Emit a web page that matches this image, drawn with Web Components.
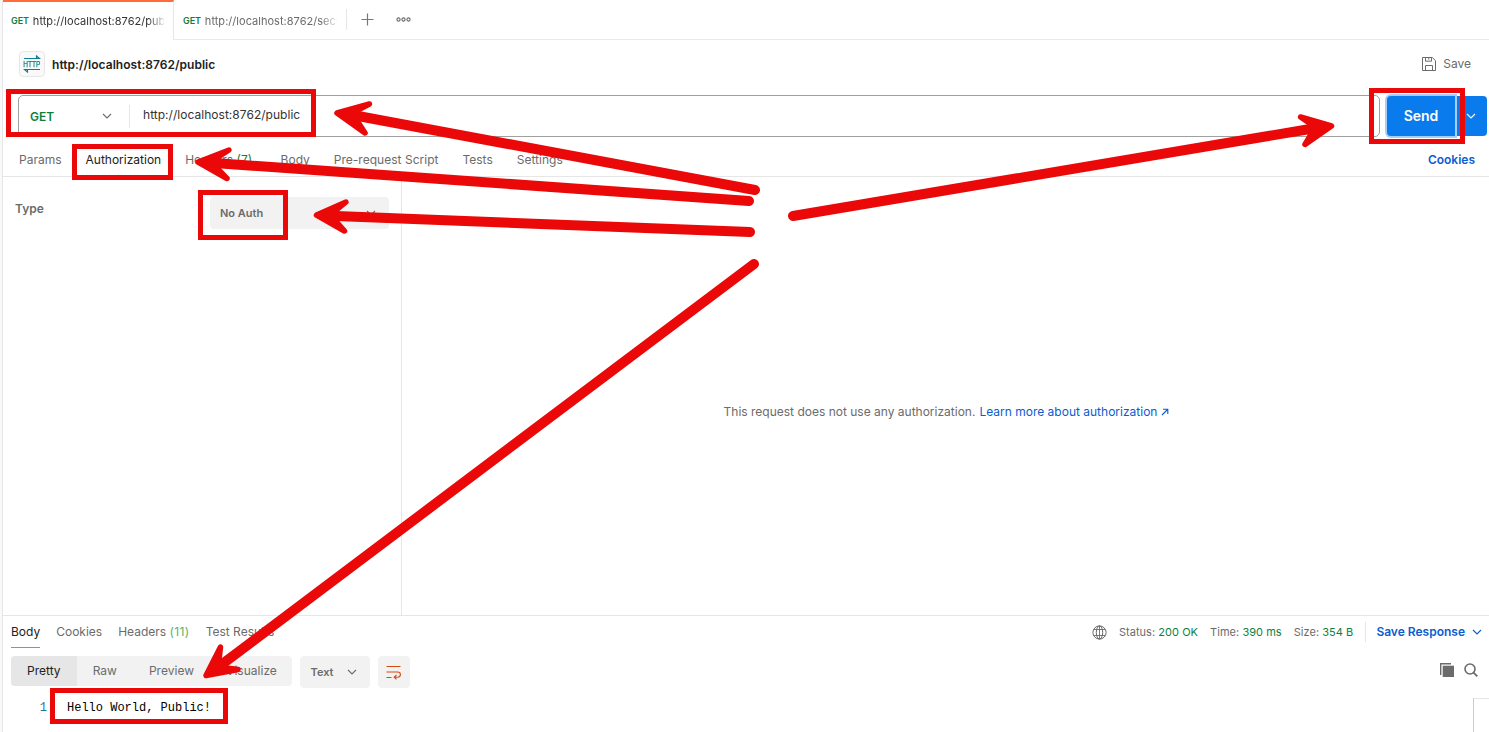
<!DOCTYPE html>
<html lang="en">
<head>
<meta charset="utf-8">
<title>http://localhost:8762/public</title>
<style>
html,body{margin:0;height:100%;overflow:hidden;background:#fff}
body{font:12px/16px Inter,"Liberation Sans",sans-serif;color:#6b6b6b}
</style>
</head>
<body>
<api-client></api-client>
<script>
const define = (name, css, html) => customElements.define(name, class extends HTMLElement {
  constructor() {
    super();
    this.attachShadow({mode: 'open'}).innerHTML = `<style>*{box-sizing:border-box}${css}</style>${html}`;
  }
});

const ICONS = {
  chevron: [10, 10, '<path d="M1 3l4 4 4-4" fill="none" stroke="currentColor" stroke-width="1.1"/>'],
  plus: [13, 13, '<path d="M6.5 .5v12M.5 6.5h12" fill="none" stroke="currentColor" stroke-width="1.2"/>'],
  dots: [15, 5, '<g fill="none" stroke="currentColor" stroke-width="1.1"><circle cx="2.5" cy="2.5" r="1.6"/><circle cx="7.5" cy="2.5" r="1.6"/><circle cx="12.5" cy="2.5" r="1.6"/></g>'],
  save: [14, 14, '<path d="M.5.5h9.8l3.2 3.2v9.8H.5zM3.5.5v3.7h6V.5M6.8 1v1.7M3.5 13.500v-5h7v5" fill="none" stroke="currentColor"/>'],
  globe: [15, 15, '<g fill="none" stroke="currentColor"><circle cx="7.500" cy="7.500" r="6.600"/><ellipse cx="7.500" cy="7.500" rx="3.200" ry="6.600"/><path d="M7.500 1v13M1.800 4.500h11.400M1.800 10.500h11.400" stroke-width=".9"/></g>'],
  wrap: [15, 13, '<path d="M.5 .5h14M.5 6h11.300a2.600 2.600 0 0 1 0 5.200H8.300M.5 11.500h5M10.500 9l-2.300 2.200 2.300 2.200" fill="none" stroke="currentColor" stroke-width="1.100"/>'],
  copy: [14, 14, '<path d="M.7 12V.7H11" fill="none" stroke="currentColor" stroke-width="1.400"/><path d="M2.700 2.700H14V14H2.700z" fill="currentColor"/>'],
  search: [14, 14, '<circle cx="6" cy="6" r="5" fill="none" stroke="currentColor" stroke-width="1.600"/><path d="M9.600 9.600l3.700 3.700" stroke="currentColor" stroke-width="1.800"/>'],
  external: [8, 8, '<path d="M1 7l5.500-5.500M2 1.200h4.800V6" fill="none" stroke="currentColor" stroke-width="1.100"/>'],
  exchange: [18, 16, '<path d="M1 2.500h15.500L13.500 0v2.500M17 13.500H1.500l3 2.500v-2.500" fill="none" stroke="currentColor" stroke-width="1.100"/>']
};
customElements.define('ui-icon', class extends HTMLElement {
  connectedCallback() {
    const [w, h, body] = ICONS[this.getAttribute('name')];
    this.attachShadow({mode: 'open'}).innerHTML =
      `<style>:host{display:block;flex:none;width:${w}px;height:${h}px}svg{display:block;overflow:visible}</style><svg width="${w}" height="${h}" viewBox="0 0 ${w} ${h}">${body}</svg>`;
  }
});

define('file-tab', `
:host{display:flex;box-sizing:border-box;height:39px;padding:3px 9px 0 8px;align-items:center;white-space:nowrap;overflow:hidden;font-size:11px;letter-spacing:.03px}
:host([active]){height:40px;background:#fff;border-top:2px solid #ff6c37;border-right:1px solid #e6e6e6;color:#333;padding-top:0}
b{font-size:9px;font-weight:600;color:#0e7f43;margin-right:4px;letter-spacing:-.1px}
span{flex:1;min-width:0;overflow:hidden;-webkit-mask:linear-gradient(90deg,#000 calc(100% - 16px),transparent calc(100% + 2px))}`,
`<b>GET</b><span><slot></slot></span>`);

define('tab-strip', `
:host{display:flex;height:40px;background:linear-gradient(#e9e9e9,#e9e9e9) 0 39px/100% 1px no-repeat}
.a{width:171px}.b{width:172px;padding-left:9px}
i{width:1px;height:21px;background:#e6e6e6;margin-top:9px}
.p{margin:13px 0 0 13.5px;color:#777}.d{margin:17px 0 0 22px;color:#6b6b6b}`,
`<file-tab class="a" active>http://localhost:8762/public</file-tab><file-tab class="b">http://localhost:8762/secured</file-tab><i></i><ui-icon class="p" name="plus"></ui-icon><ui-icon class="d" name="dots"></ui-icon>`);

define('http-badge', `
:host{display:grid;box-sizing:border-box;width:26px;height:26px;place-items:center;border:1px solid #e6e6e6;border-radius:4px;background:#f9f9f9;color:#0b7f8e}
ui-icon,span{grid-area:1/1}span{font:9px/9px "Liberation Sans",sans-serif;transform:scaleX(.73);-webkit-text-stroke:.25px}`,
`<ui-icon name="exchange"></ui-icon><span>HTTP</span>`);

define('title-row', `
:host{display:flex;height:55px;padding:0 18px 7px 16px;align-items:center}
h1{font-size:12px;font-weight:600;color:#212121;margin:2px auto 0 7px;letter-spacing:.03px}
.s{display:flex;gap:7px;align-items:center}`,
`<http-badge></http-badge><h1>http://localhost:8762/public</h1><div class="s"><ui-icon name="save"></ui-icon><span>Save</span></div>`);

define('url-bar', `
:host{display:flex;height:42px;padding:0 2px 0 15px}
.f{flex:1;display:flex;align-items:center;border:1px solid #a0a0a0;border-radius:5px;margin-right:7px;padding-left:11px}
b{font-weight:600;color:#0e7f43;width:72px;padding-top:2px}.f ui-icon{color:#6b6b6b}
.u{border-left:1px solid #e6e6e6;margin-left:17px;padding:2px 0 5px 13px;color:#333;letter-spacing:.03px;line-height:16px}
button{position:relative;border:0;margin:1px 0;background:#097bed;color:#fff;font:600 14px/40px Inter,sans-serif;padding:0;width:68px;border-radius:4px 0 0 4px;box-shadow:0 0 0 2px #a9cdf9}
.m{width:32px;margin:1px 0;background:#097bed;border-radius:0 4px 4px 0;display:flex;align-items:center;justify-content:center;color:#fff}`,
`<div class="f"><b>GET</b><ui-icon name="chevron"></ui-icon><span class="u">http://localhost:8762/public</span></div><button>Send</button><div class="m"><ui-icon name="chevron"></ui-icon></div>`);

define('request-tabs', `
:host{display:flex;height:40px;padding:7px 14px 0 16px;border-bottom:1px solid #e6e6e6;box-sizing:border-box;align-items:center;gap:24px;white-space:nowrap}
.on{color:#212121}.h{margin-right:4.500px}.p{letter-spacing:.02px}i{font-style:normal;color:#0e7f43}b{margin-left:auto;font-weight:600;color:#0b5cd0}`,
`<span>Params</span><span class="on">Authorization</span><span class="h">Headers <i>(7)</i></span><span>Body</span><span class="p">Pre-request Script</span><span>Tests</span><span>Settings</span><b>Cookies</b>`);

define('auth-panel', `
:host{display:flex;height:438px}
.l{width:399px;border-right:1px solid #e6e6e6;display:flex;justify-content:space-between;padding:20px 12px 0 12px;align-items:flex-start}
.l b{font-weight:600;margin-top:4px}
.sel{width:179px;height:32px;background:#f2f2f2;border-radius:4px;display:flex;align-items:center;justify-content:space-between;padding:0 13px 0 10px;font-size:11px;font-weight:600}
.sel ui-icon{margin-bottom:1px}
.r{flex:1;display:flex;align-items:center;justify-content:center;padding:32px 0 0 2px}
a{color:#0b5cd0;margin:0 4px 0 4px}.r ui-icon{color:#0b5cd0}`,
`<div class="l"><b>Type</b><div class="sel"><span>No Auth</span><ui-icon name="chevron"></ui-icon></div></div><div class="r"><span>This request does not use any authorization.</span><a>Learn more about authorization</a><ui-icon name="external"></ui-icon></div>`);

define('response-bar', `
:host{display:flex;height:34px;border-top:1px solid #e6e6e6;box-sizing:border-box;padding:0 7px 0 8px;white-space:nowrap}
.t{display:flex;gap:16px}.t span{height:32px;line-height:32px}.on{color:#212121;border-bottom:1px solid #ff6c37}
.t i{font-style:normal;color:#52b36b;letter-spacing:.4px}
.m{margin-left:auto;height:32px;display:flex;align-items:center;font-size:11px;gap:12px}
.m>span{letter-spacing:.04px}
em{font-style:normal;color:#0e7f43}
.v{width:1px;height:20px;background:#e6e6e6}.s{display:flex;align-items:center;gap:7px;color:#0b5cd0;font-size:12px;font-weight:600;margin-left:-2px}`,
`<div class="t"><span class="on">Body</span><span>Cookies</span><span>Headers <i>(11)</i></span><span>Test Results</span></div><div class="m"><ui-icon name="globe"></ui-icon><span>Status: <em>200 OK</em></span><span>Time: <em>390 ms</em></span><span>Size: <em>354 B</em></span><div class="v"></div><div class="s"><span>Save Response</span><ui-icon name="chevron"></ui-icon></div></div>`);

define('view-toolbar', `
:host{display:flex;height:49px;padding:7px 11px 0 8px;box-sizing:border-box;align-items:flex-start}
.g{display:flex;width:281px;height:30px;background:#f2f2f2;border-radius:4px;overflow:hidden;line-height:30px;letter-spacing:.02px}
.g span{padding:0 16px}.g .on{background:#e6e6e6;color:#212121}
.x,.w{height:32px;background:#f2f2f2;border-radius:4px;display:flex;align-items:center;margin-left:8px}
.x{width:70px;padding:0 13px 0 10.500px;justify-content:space-between;font-size:11px;font-weight:600}.w{width:32px;justify-content:center;padding-right:1px;color:#d9480f}
.c{display:flex;gap:10px;margin:7px 0 0 auto}`,
`<div class="g"><span class="on">Pretty</span><span>Raw</span><span>Preview</span><span>Visualize</span></div><div class="x"><span>Text</span><ui-icon name="chevron"></ui-icon></div><div class="w"><ui-icon name="wrap"></ui-icon></div><div class="c"><ui-icon name="copy"></ui-icon><ui-icon name="search"></ui-icon></div>`);

define('code-view', `
:host{display:flex;height:34px;font:12px/20px "Liberation Mono",monospace;color:#000}
.n{width:44px;text-align:right;color:#237893}.c{margin-left:20px;flex:1;white-space:pre}
.r{width:16px;border-left:1px solid #ccc;border-top:1px solid #e6e6e6}`,
`<span class="n">1</span><span class="c">Hello World, Public!</span><div class="r"></div>`);

// Highlight frames: x, y, width, height (outer edges). Arrows: tail, neck, then head outline.
const FRAMES = [[6,89,310,48],[72,144,101,36],[198,190,90,50],[1369,88,96,56],[50,688,178,36]];
const ARROWS = [
  [[755,190],[358,116],'337,113 369.500,104 356,111 356,119 365,133'],
  [[749,201],[214,163],'198,162 229,150 215,159 215,166 227,178.500'],
  [[750,232],[336,216],'316.500,215 346,202 334,212 334,219 344.500,231'],
  [[793,216],[1313,128.500],'1331.500,126 1300.500,117 1313,125.500 1313,131 1305,144.500'],
  [[754,264],[225,662],'206,675.500 220.500,647 219,660 226,668 238,669.500']
];
define('annotation-layer', `
:host{position:absolute;inset:0;z-index:2;pointer-events:none}svg{display:block}`,
`<svg width="1489" height="732" fill="none" stroke="#ea0808">${
  FRAMES.map(([x,y,w,h]) => `<rect x="${x+2.5}" y="${y+2.5}" width="${w-5}" height="${h-5}" stroke-width="5"/>`).join('')}${
  ARROWS.map(([a,b,p]) => `<path d="M${a}L${b}" stroke-width="10" stroke-linecap="round"/><polygon points="${p}" fill="#ea0808" stroke-width="5.500" stroke-linejoin="round"/>`).join('')}</svg>`);

define('api-client', `
:host{display:flex;position:relative;width:1489px;height:732px;overflow:hidden;background:#fff}
.gut{width:3px;background:#f9f9f9;border-right:1px solid #e6e6e6}
main{flex:1;min-width:0;display:flex;flex-direction:column}main>*{flex:none;box-sizing:border-box}`,
`<div class="gut"></div><main><tab-strip></tab-strip><title-row></title-row><url-bar></url-bar><request-tabs></request-tabs><auth-panel></auth-panel><response-bar></response-bar><view-toolbar></view-toolbar><code-view></code-view></main><annotation-layer></annotation-layer>`);
</script>
</body>
</html>
